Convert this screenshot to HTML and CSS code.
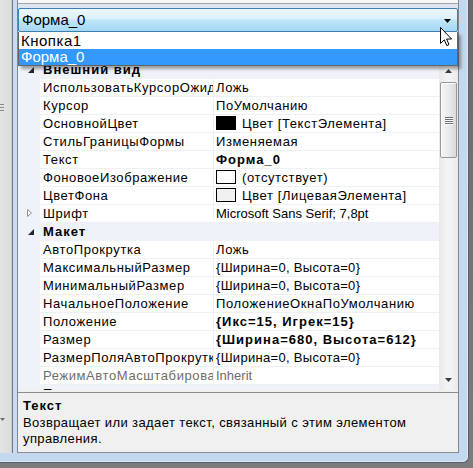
FILE: index.html
```html
<!DOCTYPE html>
<html lang="ru">
<head>
<meta charset="utf-8">
<title>Свойства</title>
<link rel="stylesheet" href="styles.css">
</head>
<body>
<div class="screen">
  <div class="window">
    <div class="leftpanel">
      <div class="lp-grip"><i></i><i></i><i></i></div>
      <svg class="lp-arrow" width="5" height="3" viewBox="0 0 5 3"><path d="M0 0 L5 0 L2.5 3 Z" fill="#6a6a6a"/></svg>
    </div>
    <div class="splitter"></div>
    <div class="client">
      <div class="topband"></div>
      <div class="combo-area">
        <div class="combo">
          <span class="combo-text">Форма_0</span>
          <svg class="combo-arrow" width="7" height="4" viewBox="0 0 7 4"><path d="M0 0 L7 0 L3.5 4 Z" fill="#000"/></svg>
        </div>
      </div>
      <div class="toolbar"></div>
      <div class="grid">
        <div class="rows">
          <div class="cat"><span class="m"><svg class="exp" width="6" height="6" viewBox="0 0 6 6"><path d="M6 0 L6 6 L0 6 Z" fill="#262626"/></svg></span><span class="cat-label">Внешний вид</span></div>
          <div class="row"><span class="m"></span><span class="name">ИспользоватьКурсорОжидания</span><span class="val">Ложь</span></div>
          <div class="row"><span class="m"></span><span class="name">Курсор</span><span class="val">ПоУмолчанию</span></div>
          <div class="row"><span class="m"></span><span class="name">ОсновнойЦвет</span><span class="val"><span class="swatch sw-black"></span>Цвет [ТекстЭлемента]</span></div>
          <div class="row"><span class="m"></span><span class="name">СтильГраницыФормы</span><span class="val">Изменяемая</span></div>
          <div class="row"><span class="m"></span><span class="name">Текст</span><span class="val b">Форма_0</span></div>
          <div class="row"><span class="m"></span><span class="name">ФоновоеИзображение</span><span class="val"><span class="swatch sw-white"></span>(отсутствует)</span></div>
          <div class="row"><span class="m"></span><span class="name">ЦветФона</span><span class="val"><span class="swatch sw-face"></span>Цвет [ЛицеваяЭлемента]</span></div>
          <div class="row"><span class="m"><svg class="col" width="5" height="8" viewBox="0 0 5 8"><path d="M0.5 0.5 L4.5 4 L0.5 7.5 Z" fill="#fff" stroke="#8f8f8f" stroke-width="1"/></svg></span><span class="name">Шрифт</span><span class="val lat">Microsoft Sans Serif; 7,8pt</span></div>
          <div class="cat"><span class="m"><svg class="exp" width="6" height="6" viewBox="0 0 6 6"><path d="M6 0 L6 6 L0 6 Z" fill="#262626"/></svg></span><span class="cat-label">Макет</span></div>
          <div class="row"><span class="m"></span><span class="name">АвтоПрокрутка</span><span class="val">Ложь</span></div>
          <div class="row"><span class="m"></span><span class="name">МаксимальныйРазмер</span><span class="val mix">{Ширина=0, Высота=0}</span></div>
          <div class="row"><span class="m"></span><span class="name">МинимальныйРазмер</span><span class="val mix">{Ширина=0, Высота=0}</span></div>
          <div class="row"><span class="m"></span><span class="name">НачальноеПоложение</span><span class="val">ПоложениеОкнаПоУмолчанию</span></div>
          <div class="row"><span class="m"></span><span class="name">Положение</span><span class="val b">{Икс=15, Игрек=15}</span></div>
          <div class="row"><span class="m"></span><span class="name">Размер</span><span class="val b">{Ширина=680, Высота=612}</span></div>
          <div class="row"><span class="m"></span><span class="name">РазмерПоляАвтоПрокрутки</span><span class="val mix">{Ширина=0, Высота=0}</span></div>
          <div class="row ro"><span class="m"></span><span class="name">РежимАвтоМасштабирования</span><span class="val lat">Inherit</span></div>
          <div class="cat"><span class="m"><svg class="exp" width="6" height="6" viewBox="0 0 6 6"><path d="M6 0 L6 6 L0 6 Z" fill="#262626"/></svg></span><span class="cat-label">Поведение</span></div>
        </div>
        <div class="scrollbar">
          <div class="sb-btn"><svg width="7" height="4" viewBox="0 0 7 4"><path d="M0 4 L3.5 0 L7 4 Z" fill="#3c3c3c"/></svg></div>
          <div class="sb-track">
            <div class="thumb"><div class="grip"><i></i><i></i><i></i><i></i></div></div>
          </div>
          <div class="sb-btn"><svg width="7" height="4" viewBox="0 0 7 4"><path d="M0 0 L7 0 L3.5 4 Z" fill="#3c3c3c"/></svg></div>
        </div>
      </div>
      <div class="gap"></div>
      <div class="help">
        <div class="help-title">Текст</div>
        <div class="help-desc">Возвращает или задает текст, связанный с этим элементом управления.</div>
      </div>
      <div class="dropdown">
        <div class="item">Кнопка1</div>
        <div class="item sel">Форма_0</div>
      </div>
    </div>
  </div>
  <svg class="cursor" width="13" height="20" viewBox="0 0 13 20"><path d="M0.5 0.5 L0.5 16.5 L4.3 12.8 L6.8 18.6 L9 17.6 L6.6 12 L11.6 12 Z" fill="#fff" stroke="#000" stroke-width="1" stroke-linejoin="miter"/></svg>
</div>
</body>
</html>
```

FILE: styles.css
```css
* { box-sizing: border-box; }
html, body { margin: 0; padding: 0; }
body {
  font-family: "Liberation Sans", Arial, sans-serif;
  font-size: 13px;
  color: #000;
  background: #6e6e6e;
}
.screen {
  position: relative;
  width: 473px;
  height: 468px;
  overflow: hidden;
  background: linear-gradient(#6a6a6a, #7c7c7c);
}
.window {
  display: flex;
  width: 469px;
  height: 463px;
  padding-right: 9px;
  padding-bottom: 9px;
  background: #c4d8ef;
  border-right: 1px solid #55606e;
  border-bottom: 1px solid #55606e;
  border-bottom-right-radius: 6px;
  box-shadow: inset -1px -1px 0 #dbe8f6;
}
.leftpanel {
  position: relative;
  width: 12px;
  height: 453px;
  background: linear-gradient(to right, #e4e4e4, #dcdcdc);
  border-right: 1px solid #cfcfcf;
}
.lp-grip {
  position: absolute;
  left: 0;
  top: 104px;
  display: flex;
  flex-direction: column;
  gap: 2px;
}
.lp-grip i {
  display: block;
  width: 4px;
  height: 1px;
  background: #8a8a8a;
}
.lp-arrow {
  position: absolute;
  left: 0;
  top: 418px;
}
.splitter {
  width: 5px;
  height: 453px;
  background: #c7dbf1;
  border-left: 1px solid #6e7884;
}
.client {
  position: relative;
  width: 442px;
  height: 453px;
  display: flex;
  flex-direction: column;
  background: #f0f0f0;
  border-left: 1px solid #828790;
  border-right: 1px solid #828790;
}
.topband {
  height: 4px;
  background: #f7f7f7;
  border-bottom: 1px solid #a3a3a3;
}
.combo-area {
  height: 28px;
  padding-top: 4px;
  background: #dde7f2;
}
.combo {
  height: 24px;
  display: flex;
  align-items: center;
  justify-content: space-between;
  padding: 0 6px 0 3px;
  border: 1px solid #3c7fb1;
  border-radius: 2px;
  background: linear-gradient(#ecf7fd 0%, #dbf1fc 45%, #bfe6fb 50%, #a6d8f3 100%);
}
.combo-text {
  font-size: 15px;
  letter-spacing: 0;
  line-height: 22px;
}
.combo-arrow { margin-top: 1px; }
.toolbar {
  height: 29px;
  background: #f0f0f0;
}
.grid {
  display: flex;
  height: 329px;
  overflow: hidden;
  background: #fff;
}
.rows {
  width: 421px;
  overflow: hidden;
  letter-spacing: 0.6px;
}
.row, .cat {
  display: flex;
  height: 18px;
}
.m {
  width: 22px;
  flex: none;
  background: #eff3f9;
  position: relative;
}
.exp { position: absolute; left: 10px; top: 6px; }
.col { position: absolute; left: 9px; top: 4px; }
.name {
  width: 173px;
  flex: none;
  padding-left: 3px;
  line-height: 17px;
  white-space: nowrap;
  overflow: hidden;
  border-bottom: 1px solid #edf0f5;
}
.val {
  width: 226px;
  flex: none;
  display: flex;
  align-items: flex-start;
  padding-left: 2px;
  line-height: 17px;
  white-space: nowrap;
  overflow: hidden;
  border-left: 1px solid #edf0f5;
  border-bottom: 1px solid #edf0f5;
}
.val.lat { letter-spacing: 0; }
.val.mix { letter-spacing: 0.3px; }
.val.b { font-weight: bold; letter-spacing: 1px; }
.ro .name, .ro .val { color: #6d6d6d; }
.cat {
  background: #eff3f9;
}
.cat-label {
  padding-left: 3px;
  line-height: 17px;
  font-weight: bold;
  letter-spacing: 1px;
}
.swatch {
  flex: none;
  width: 20px;
  height: 14px;
  margin: 1px 6px 0 0;
  border: 1px solid #000;
}
.sw-black { background: #000; }
.sw-white { background: #fff; }
.sw-face { background: #f0f0f0; }
.scrollbar {
  width: 19px;
  display: flex;
  flex-direction: column;
  background: linear-gradient(to right, #e9e9e9, #f3f3f3 40%, #f3f3f3 60%, #eaeaea);
}
.sb-btn {
  height: 20px;
  display: flex;
  align-items: center;
  justify-content: center;
}
.sb-track {
  flex: 1;
  padding: 1px 1px 0 1px;
}
.thumb {
  height: 76px;
  border: 1px solid #979797;
  border-radius: 2px;
  background: linear-gradient(to right, #f5f5f5, #ebebeb 50%, #d9d9d9);
  box-shadow: inset 1px 1px 0 #fdfdfd;
  display: flex;
  align-items: center;
  justify-content: center;
}
.grip {
  display: flex;
  flex-direction: column;
  gap: 1px;
}
.grip i {
  display: block;
  width: 8px;
  height: 1px;
  background: #707070;
  box-shadow: 0 1px 0 #fafafa;
}
.gap {
  height: 2px;
  background: #f0f0f0;
}
.help {
  height: 61px;
  padding: 5px 5px 0 5px;
  background: #f0f0f0;
  border-top: 1px solid #8c8c8c;
  border-bottom: 1px solid #8c8c8c;
}
.help-title {
  font-weight: bold;
  letter-spacing: 1px;
  line-height: 16px;
}
.help-desc {
  margin-top: 1px;
  letter-spacing: 0.4px;
  line-height: 16px;
}
.dropdown {
  position: absolute;
  left: 0;
  top: 32px;
  width: 440px;
  height: 34px;
  padding: 1px 0;
  background: #fff;
  border: 1px solid #646464;
  border-top: none;
  box-shadow: 3px 3px 3px rgba(0, 0, 0, 0.35);
}
.item {
  height: 16px;
  line-height: 16px;
  padding-left: 2px;
  font-size: 15px;
  letter-spacing: 0.5px;
}
.item.sel {
  background: #3399ff;
  color: #fff;
  letter-spacing: 0;
}
.cursor {
  position: absolute;
  left: 440px;
  top: 27px;
}
```
